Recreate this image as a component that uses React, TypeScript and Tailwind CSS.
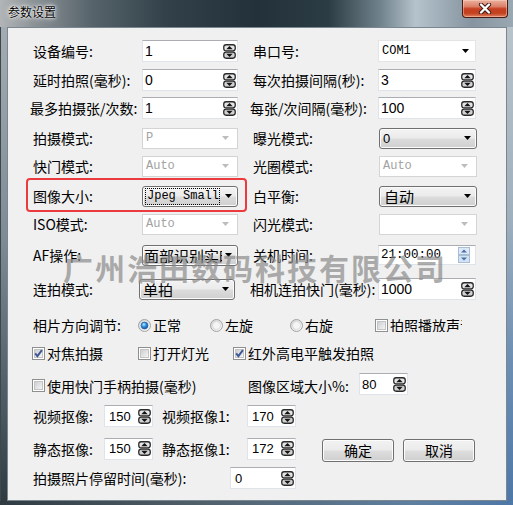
import React from "react"

type Kids = { children?: React.ReactNode }

function Spin() {
  return (
    <svg width="13" height="15" viewBox="0 0 13 15" className="shrink-0">
      <rect x="0.75" y="0.75" width="11.5" height="6.2" rx="2.4" fill="#e4e4e4" stroke="#2a2a2a" strokeWidth="1.3" />
      <path d="M3.3 5.3h6.4L6.5 2.1z" fill="#111" />
      <rect x="0.75" y="8.05" width="11.5" height="6.2" rx="2.4" fill="#d2d2d2" stroke="#2a2a2a" strokeWidth="1.3" />
      <path d="M3.3 9.7h6.4l-3.2 3.2z" fill="#111" />
    </svg>
  )
}

function TimeSpin() {
  return (
    <svg width="12" height="16" viewBox="0 0 12 16" className="shrink-0">
      <rect x="0.5" y="0.5" width="11" height="7" fill="#dde9f7" stroke="#a8bdd6" />
      <path d="M3 5.5h6L6 2.5z" fill="#4a70a8" />
      <rect x="0.5" y="8.5" width="11" height="7" fill="#d3e2f4" stroke="#a8bdd6" />
      <path d="M3 10.5h6L6 13.5z" fill="#4a70a8" />
    </svg>
  )
}

function Arrow({ color = "#000" }: { color?: string }) {
  return (
    <svg width="7" height="4" viewBox="0 0 7 4" className="shrink-0">
      <path d="M0 0h7L3.5 4z" fill={color} />
    </svg>
  )
}

function Radio({ checked = false }: { checked?: boolean }) {
  return (
    <svg width="13" height="13" viewBox="0 0 13 13" className="shrink-0">
      <defs>
        <linearGradient id="rOuter" x1="0" y1="0" x2="1" y2="1">
          <stop offset="0" stopColor="#cfd1d4" />
          <stop offset="1" stopColor="#fbfbfb" />
        </linearGradient>
        <radialGradient id="rDot" cx="0.4" cy="0.35" r="0.75">
          <stop offset="0" stopColor="#c4ecff" />
          <stop offset="0.45" stopColor="#2b8fe2" />
          <stop offset="1" stopColor="#0a4a99" />
        </radialGradient>
      </defs>
      <circle cx="6.5" cy="6.5" r="6" fill="url(#rOuter)" stroke="#a3a3a3" />
      <circle cx="6.5" cy="6.5" r="4" fill="#f5f5f5" stroke="#d6d6d6" strokeWidth="0.8" />
      {checked && <circle cx="6.5" cy="6.5" r="3.4" fill="url(#rDot)" stroke="#1b5596" strokeWidth="0.6" />}
    </svg>
  )
}

function Check({ checked = false }: { checked?: boolean }) {
  return (
    <svg width="13" height="13" viewBox="0 0 13 13" className="shrink-0">
      <defs>
        <linearGradient id="cIn" x1="0" y1="0" x2="1" y2="1">
          <stop offset="0" stopColor="#c9ccd1" />
          <stop offset="1" stopColor="#f7f7f7" />
        </linearGradient>
      </defs>
      <rect x="0.5" y="0.5" width="12" height="12" fill="#fff" stroke="#8e8f8f" />
      <rect x="2.5" y="2.5" width="8" height="8" fill="url(#cIn)" stroke="#c4c4c4" />
      {checked && <path d="M3.2 6.4l2.2 2.7L9.9 3.2" fill="none" stroke="#3c5596" strokeWidth="1.9" />}
    </svg>
  )
}

function SpinBox({ value, w, num = "text-[14px]" }: { value: string; w: string; num?: string }) {
  return (
    <div
      className={`flex h-[22px] shrink-0 items-center justify-between border border-[#dfe3ea] border-t-[#abadb3] bg-white pl-[2px] pr-[1px] font-['Liberation_Sans',sans-serif] leading-none ${num} ${w}`}
    >
      <span>{value}</span>
      <Spin />
    </div>
  )
}

function ListCombo({ value }: { value: string }) {
  return (
    <div className="flex h-[22px] w-[98px] shrink-0 items-center justify-between border border-[#e4e4e4] bg-white pl-[3px] pr-[6px] font-['Liberation_Mono',monospace] text-[12px] leading-none">
      <span>{value}</span>
      <Arrow />
    </div>
  )
}

function OffCombo({ value, w }: { value: string; w: string }) {
  return (
    <div
      className={`flex h-[21px] shrink-0 items-center justify-between border border-[#d4d4d4] bg-white pl-[3px] pr-[8px] font-['Liberation_Mono',monospace] text-[12px] leading-none text-[#a2a2a2] ${w}`}
    >
      <span>{value}</span>
      <Arrow color="#bdbdbd" />
    </div>
  )
}

function BtnCombo({ children, w, pad = "pl-[3px]" }: Kids & { w: string; pad?: string }) {
  return (
    <div
      className={`flex h-[21px] shrink-0 items-center gap-[3px] overflow-hidden rounded-[3px] border border-[#707070] bg-[linear-gradient(180deg,#f3f3f3_0%,#ebebeb_48%,#dcdcdc_52%,#cfcfcf_100%)] pr-[5px] shadow-[inset_0_0_0_1px_#fbfbfb] ${pad} ${w}`}
    >
      <div className="flex min-w-0 flex-1 items-center overflow-hidden whitespace-nowrap">{children}</div>
      <Arrow />
    </div>
  )
}

function Label({ children, w, className = "" }: Kids & { w: string; className?: string }) {
  return <span className={`shrink-0 whitespace-nowrap text-[14px] leading-none ${w} ${className}`}>{children}</span>
}

function Button({ children }: Kids) {
  return (
    <button
      type="button"
      className="h-[23px] w-[72px] shrink-0 rounded-[3px] border border-[#707070] bg-[linear-gradient(180deg,#f2f2f2_0%,#ebebeb_48%,#dddddd_52%,#cfcfcf_100%)] text-[14px] leading-none shadow-[inset_0_0_0_1px_#fcfcfc]"
    >
      {children}
    </button>
  )
}

export default function App() {
  return (
    <div className="relative h-[505px] w-[513px] overflow-hidden bg-[#8d9ba5] font-['Noto_Sans_CJK_SC','Liberation_Sans',sans-serif] text-black">
      {/* title bar */}
      <div className="flex h-[27px] items-start bg-[linear-gradient(90deg,#b1b5b7_0%,#8a9195_7%,#56636a_18%,#33424a_32%,#23323a_50%,#2c3c44_64%,#6f818b_74%,#b5c3cc_81%,#a3b2bc_85%,#8594a0_92%,#9aa8b2_100%)]">
        <span className="pl-[8px] pt-[4px] text-[12px] leading-[16px] [text-shadow:0_0_6px_#fff,0_0_3px_#fff,0_0_1px_#fff]">
          参数设置
        </span>
        <div className="ml-auto mr-[5px] flex h-[18px] w-[46px] items-center justify-center rounded-b-[4px] border border-t-0 border-[#4a1b12] bg-[linear-gradient(180deg,#eab2a0_0%,#dc8068_38%,#c63f22_52%,#c3421f_78%,#e08264_100%)] shadow-[inset_0_0_0_1px_rgba(255,220,200,0.45)]">
          <svg width="14" height="11" viewBox="0 0 14 11">
            <path d="M3 1.5l8 8M11 1.5l-8 8" stroke="#3a1a14" strokeWidth="4.2" strokeLinecap="round" />
            <path d="M3 1.5l8 8M11 1.5l-8 8" stroke="#fff" strokeWidth="2.4" strokeLinecap="round" />
          </svg>
        </div>
      </div>

      <div className="flex h-[474px]">
        <div className="w-[7px] border-l border-[#3d474c] bg-[linear-gradient(180deg,#a3acb2_0%,#7d8b95_45%,#4b5962_80%,#2f3b41_100%)]" />

        {/* client panel */}
        <div className="h-full w-[500px] border border-[#7b8790] bg-[#f0f0f0] pl-[25px] pt-[12px]">
          <div className="flex h-[22px] items-center">
            <Label w="w-[109px]">设备编号:</Label>
            <SpinBox value="1" w="w-[96px]" />
            <Label w="w-[125px]" className="ml-[15px]">串口号:</Label>
            <ListCombo value="COM1" />
          </div>

          <div className="mt-[7px] flex h-[22px] items-center">
            <Label w="w-[109px]">延时拍照(毫秒):</Label>
            <SpinBox value="0" w="w-[96px]" />
            <Label w="w-[125px]" className="ml-[15px]">每次拍摄间隔(秒):</Label>
            <SpinBox value="3" w="w-[98px]" />
          </div>

          <div className="mt-[6px] flex h-[22px] items-center">
            <Label w="w-[112px]" className="ml-[-3px]">最多拍摄张/次数:</Label>
            <SpinBox value="1" w="w-[96px]" />
            <Label w="w-[128px]" className="ml-[12px]">每张/次间隔(毫秒):</Label>
            <SpinBox value="100" w="w-[98px]" />
          </div>

          <div className="mt-[8px] flex h-[22px] items-center">
            <Label w="w-[109px]">拍摄模式:</Label>
            <OffCombo value="P" w="w-[96px]" />
            <Label w="w-[126px]" className="ml-[15px]">曝光模式:</Label>
            <BtnCombo w="w-[98px]">
              <span className="font-['Liberation_Sans',sans-serif] text-[13px] leading-none">0</span>
            </BtnCombo>
          </div>

          <div className="mt-[6px] flex h-[22px] items-center">
            <Label w="w-[109px]">快门模式:</Label>
            <OffCombo value="Auto" w="w-[96px]" />
            <Label w="w-[126px]" className="ml-[15px]">光圈模式:</Label>
            <OffCombo value="Auto" w="w-[98px]" />
          </div>

          <div className="relative mt-[8px] flex h-[22px] items-center">
            <div className="absolute left-[-7px] top-[-7px] h-[34px] w-[221px] rounded-[4px] border-2 border-[#ec3b3f]" />
            <Label w="w-[109px]">图像大小:</Label>
            <BtnCombo w="w-[96px]" pad="pl-[2px]">
              <span className="flex h-[17px] w-[75px] items-center overflow-hidden whitespace-nowrap border border-dotted border-black pl-[1px] font-['Liberation_Mono',monospace] text-[12px] leading-none">
                Jpeg Small(
              </span>
            </BtnCombo>
            <Label w="w-[126px]" className="ml-[15px]">白平衡:</Label>
            <BtnCombo w="w-[98px]" pad="pl-[4px]">
              <span className="text-[15px] leading-none">自动</span>
            </BtnCombo>
          </div>

          <div className="mt-[6px] flex h-[22px] items-center">
            <Label w="w-[109px]">ISO模式:</Label>
            <OffCombo value="Auto" w="w-[96px]" />
            <Label w="w-[126px]" className="ml-[15px]">闪光模式:</Label>
            <OffCombo value="" w="w-[98px]" />
          </div>

          <div className="mt-[9px] flex h-[22px] items-center">
            <Label w="w-[109px]">AF操作:</Label>
            <BtnCombo w="w-[96px]" pad="pl-[1px]">
              <span className="text-[15px] leading-none">面部识别实时</span>
            </BtnCombo>
            <Label w="w-[125px]" className="ml-[15px]">关机时间:</Label>
            <div className="flex h-[20px] w-[98px] shrink-0 items-center justify-between border border-[#dfe3ea] border-t-[#abadb3] bg-white pl-[2px] pr-[5px] font-['Liberation_Mono',monospace] text-[12.5px] leading-none">
              <span>21:00:00</span>
              <TimeSpin />
            </div>
          </div>

          <div className="mt-[12px] flex h-[22px] items-center">
            <Label w="w-[109px]">连拍模式:</Label>
            <BtnCombo w="w-[96px] ml-[-3px]" pad="pl-[3px]">
              <span className="text-[15px] leading-none">单拍</span>
            </BtnCombo>
            <Label w="w-[128px]" className="ml-[15px]">相机连拍快门(毫秒):</Label>
            <SpinBox value="1000" w="w-[98px]" />
          </div>

          {/* orientation */}
          <div className="mt-[15px] flex h-[20px] items-center text-[14px] leading-none">
            <Label w="w-[105px]">相片方向调节:</Label>
            <span className="flex w-[72px] shrink-0 items-center gap-[2px]">
              <Radio checked />
              正常
            </span>
            <span className="flex w-[80px] shrink-0 items-center gap-[2px]">
              <Radio />
              左旋
            </span>
            <span className="flex w-[85px] shrink-0 items-center gap-[2px]">
              <Radio />
              右旋
            </span>
            <span className="flex shrink-0 items-center gap-[2px]">
              <Check />
              <span className="w-[72px] overflow-hidden whitespace-nowrap">拍照播放声音</span>
            </span>
          </div>

          <div className="mt-[8px] ml-[-1px] flex h-[20px] items-center text-[14px] leading-none">
            <span className="flex w-[106px] shrink-0 items-center gap-[2px]">
              <Check checked />
              对焦拍摄
            </span>
            <span className="flex w-[95px] shrink-0 items-center gap-[2px]">
              <Check />
              打开灯光
            </span>
            <span className="flex shrink-0 items-center gap-[2px]">
              <Check checked />
              红外高电平触发拍照
            </span>
          </div>

          <div className="mt-[10px] ml-[-1px] flex h-[22px] items-center text-[14px] leading-none">
            <span className="flex w-[216px] shrink-0 items-center gap-[2px] pt-[3px]">
              <Check />
              使用快门手柄拍摄(毫秒)
            </span>
            <Label w="w-[111px]" className="pt-[3px]">图像区域大小%:</Label>
            <SpinBox value="80" w="w-[49px]" num="text-[13px]" />
          </div>

          <div className="mt-[10px] flex h-[22px] items-center">
            <Label w="w-[71px]">视频抠像:</Label>
            <SpinBox value="150" w="w-[49px] pl-[4px]" num="text-[13px]" />
            <Label w="w-[85px]" className="ml-[9px]">视频抠像1:</Label>
            <SpinBox value="170" w="w-[49px] pl-[4px]" num="text-[13px]" />
          </div>

          <div className="mt-[9px] flex h-[25px] items-center">
            <Label w="w-[71px]">静态抠像:</Label>
            <SpinBox value="150" w="w-[49px] pl-[4px]" num="text-[13px]" />
            <Label w="w-[85px]" className="ml-[9px]">静态抠像1:</Label>
            <SpinBox value="172" w="w-[49px] pl-[4px]" num="text-[13px]" />
            <div className="ml-[26px] flex gap-[9px] pt-[3px]">
              <Button>确定</Button>
              <Button>取消</Button>
            </div>
          </div>

          <div className="mt-[6px] flex h-[22px] items-center">
            <Label w="w-[197px]">拍摄照片停留时间(毫秒):</Label>
            <SpinBox value="0" w="w-[66px] pl-[4px]" num="text-[13px]" />
          </div>
        </div>

        <div className="w-[6px] bg-[linear-gradient(180deg,#b9c3ca_0%,#9fb0bd_40%,#6d8fb3_70%,#4e78a8_100%)]" />
      </div>
      <div className="h-[4px] bg-[linear-gradient(90deg,#2f3b41_0%,#51616c_40%,#5f7f9f_80%,#4e78a8_100%)]" />

      {/* watermark */}
      <div className="pointer-events-none absolute left-[63px] top-[252px] whitespace-nowrap text-[30px] font-bold leading-none tracking-[2px] text-[#8a8a8a]/70">
        广州浩田数码科技有限公司
      </div>
    </div>
  )
}
